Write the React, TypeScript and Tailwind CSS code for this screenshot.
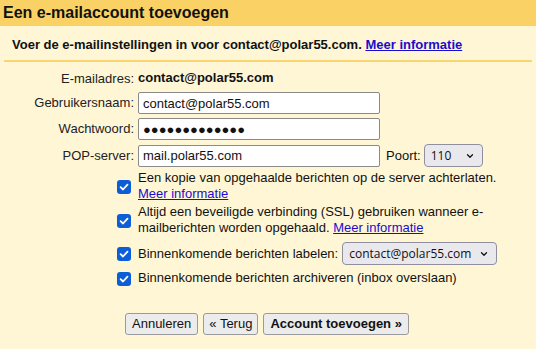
import { ChevronDown } from 'lucide-react';

const labelFont = { fontFamily: '"Liberation Sans", Arial, sans-serif' };

function Check() {
  return (
    <span className="mt-[1px] inline-flex h-[14px] w-[14px] shrink-0 items-center justify-center rounded-[3px] bg-[#0b5ed7]">
      <svg width="10" height="10" viewBox="0 0 10 10" fill="none">
        <path d="M1.6 5.2 L4 7.5 L8.5 2.6" stroke="white" strokeWidth="1.8" strokeLinecap="round" strokeLinejoin="round" />
      </svg>
    </span>
  );
}

function FakeSelect({ value, className }: { value: string; className: string }) {
  return (
    <div
      className={`relative flex h-[23px] items-center rounded-[4px] border border-[#8f8f9d] bg-[#e9e9ed] pl-[6px] text-[12px] text-[#111] ${className}`}
      style={{ fontFamily: '"Open Sans", "Noto Sans", sans-serif' }}
    >
      {value}
      <ChevronDown className="absolute right-[7px] top-[6px] h-[10px] w-[10px]" strokeWidth={3} />
    </div>
  );
}

function Row({ label, children }: { label: string; children: React.ReactNode }) {
  return (
    <div className="flex items-center">
      <div className="w-[138px] shrink-0 pr-[4px] text-right text-[13px] text-[#222]">{label}</div>
      <div className="flex items-center">{children}</div>
    </div>
  );
}

export default function App() {
  const inputCls =
    'h-[22px] w-[242px] rounded-[2px] border border-[#8a8a8a] bg-white px-[4px] text-[13px] text-[#111] outline-none';

  return (
    <div className="h-[349px] w-[536px] overflow-hidden bg-[#fff6d6] text-[#111]" style={labelFont}>
      <div className="flex h-[26px] items-center bg-[#fad164] pl-[3px] text-[16px] font-bold">
        Een e-mailaccount toevoegen
      </div>

      <div className="mx-[4px] border-b-2 border-[#f8d56e] pb-[5px] pl-[8px] pt-[9px] text-[13px] font-bold">
        Voer de e-mailinstellingen in voor contact@polar55.com.{' '}
        <a className="text-[#1a0dcc] underline" href="#">
          Meer informatie
        </a>
      </div>

      <div className="mt-[7px] flex flex-col gap-[4px]">
        <Row label="E-mailadres:">
          <span className="h-[18px] text-[13px] font-bold leading-[18px]">contact@polar55.com</span>
        </Row>
        <Row label="Gebruikersnaam:">
          <input className={inputCls} defaultValue="contact@polar55.com" style={labelFont} />
        </Row>
        <Row label="Wachtwoord:">
          <input className={inputCls} readOnly value="●●●●●●●●●●●●●" style={labelFont} />
        </Row>
        <Row label="POP-server:">
          <input className={inputCls} defaultValue="mail.polar55.com" style={labelFont} />
          <span className="ml-[6px] mr-[3px] text-[13px]">Poort:</span>
          <FakeSelect value="110" className="w-[59px]" />
        </Row>
      </div>

      <div className="ml-[117px] mt-[3px] flex w-[390px] flex-col text-[13px] leading-[16px]">
        <div className="flex items-center gap-[7px]">
          <Check />
          <div>
            Een kopie van opgehaalde berichten op de server achterlaten.
            <br />
            <a className="text-[#1a0dcc] underline" href="#">
              Meer informatie
            </a>
          </div>
        </div>
        <div className="mt-[2px] flex items-center gap-[7px]">
          <Check />
          <div>
            Altijd een beveiligde verbinding (SSL) gebruiken wanneer e-
            <br />
            mailberichten worden opgehaald.{' '}
            <a className="text-[#1a0dcc] underline" href="#">
              Meer informatie
            </a>
          </div>
        </div>
        <div className="mt-[6px] flex items-center gap-[7px]">
          <Check />
          <span>Binnenkomende berichten labelen:</span>
          <FakeSelect value="contact@polar55.com" className="-ml-[3px] w-[155px]" />
        </div>
        <div className="mt-[5px] flex items-center gap-[7px]">
          <Check />
          <span>Binnenkomende berichten archiveren (inbox overslaan)</span>
        </div>
      </div>

      <div className="ml-[125px] mt-[27px] flex gap-[5px] text-[13px]">
        <button className="h-[22px] rounded-[3px] border border-[#9a9a9a] bg-[#ececec] px-[6px]">Annuleren</button>
        <button className="h-[22px] rounded-[3px] border border-[#9a9a9a] bg-[#ececec] px-[5px]">« Terug</button>
        <button className="h-[22px] rounded-[3px] border border-[#9a9a9a] bg-[#ececec] px-[6px] font-bold">
          Account toevoegen »
        </button>
      </div>
    </div>
  );
}
